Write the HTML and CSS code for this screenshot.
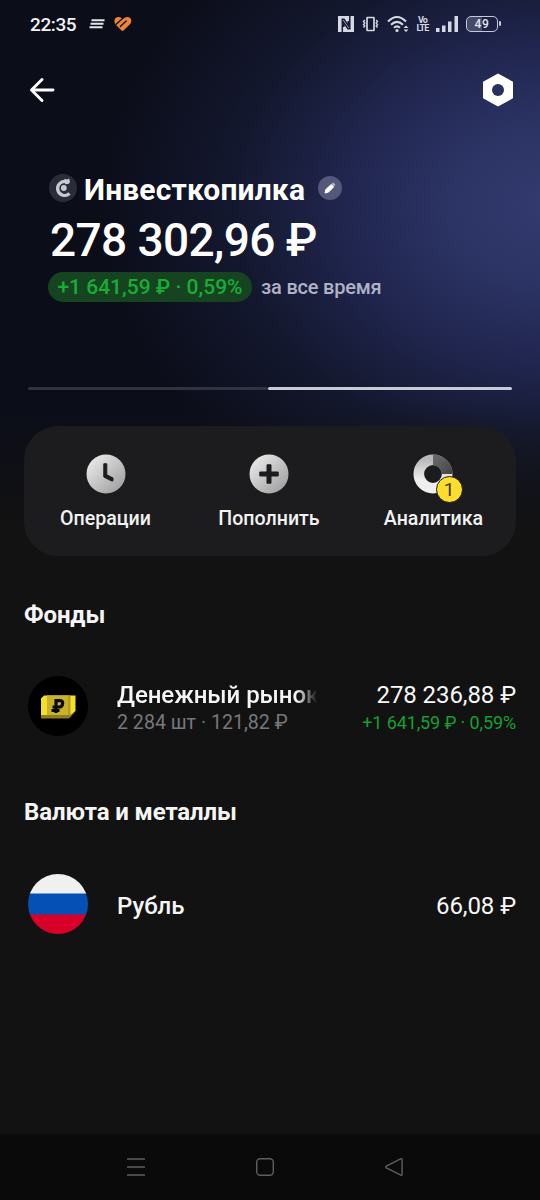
FILE: index.html
```html
<!DOCTYPE html>
<html lang="ru">
<head>
<meta charset="utf-8">
<title>Инвесткопилка</title>
<link rel="stylesheet" href="styles.css">
</head>
<body>
<div class="screen">
  <header class="status">
    <div class="status-left">
      <span class="clock">22:35</span>
      <svg class="ic-lines" width="16" height="10" viewBox="0 0 16 10" stroke="#e6e7ec" stroke-width="1.9"><path d="M2.5 1.2H15.500M1.500 4.700H14.500M.5 8.300H13.500"/></svg>
      <svg class="ic-heart" width="18" height="16" viewBox="0 0 18 16"><path fill="#ee8438" d="M8.800 3.200Q11 .9 13.800 1Q17.300 1.500 17.300 5Q17.200 7.100 15.700 8.500L9.500 14.500Q8.500 15.300 7.500 14.500L1.800 8.800Q.4 7.300.4 5Q.6 1.300 4.200 1Q7 .9 8.800 3.200Z"/><path fill="none" stroke="#0d0f1e" stroke-width="1.300" stroke-linecap="round" d="M2.200 8.300 8.300 2.800M6.300 10.500 12.200 5"/></svg>
    </div>
    <div class="status-right">
      <svg width="16" height="16" viewBox="0 0 16 16"><path fill="#d6d8e2" d="M0 0H16V16H0Z"/><path fill="none" stroke="#181c38" stroke-width="1.500" d="M4.300 16V3.300H6L10.300 9.500V5M11.800 0V12.700H10L5.800 6.700V11"/></svg>
      <svg width="17" height="16" viewBox="0 0 17 16" fill="none" stroke="#d6d8e2" stroke-width="1.700"><rect x="5" y="1.500" width="7" height="13" rx=".5"/><path d="M2.800 4 1.500 5.500 2.800 7 1.500 8.500 2.800 10 1.500 11.500M14.200 4 15.500 5.500 14.200 7 15.500 8.500 14.200 10 15.500 11.500" stroke-width="1.400"/></svg>
      <svg width="22" height="18" viewBox="0 0 22 18" fill="none" stroke="#d6d8e2" stroke-width="2.100"><path d="M1 6.500Q10 -2.600 19 6.500M4 9.700Q10 4 16 9.700M7 12.700Q10 10 13 12.700"/><circle cx="10" cy="15.500" r="1.600" fill="#d6d8e2" stroke="none"/><path fill="#d6d8e2" stroke="none" d="M16.500 13 19 10.500 21.500 13ZM16.500 14.500H21.500L19 17Z"/></svg>
      <span class="volte"><span>Vo</span><span>LTE</span></span>
      <svg width="22" height="16" viewBox="0 0 22 16" fill="#d6d8e2"><path d="M0 12H3.500V16H0ZM6 9.500H9.500V16H6ZM12 5.500H15.500V16H12ZM18.500 0H22V16H18.500Z"/></svg>
      <span class="battery">49</span>
    </div>
  </header>

  <nav class="topbar">
    <svg width="26" height="26" viewBox="0 0 26 26" fill="none" stroke="#fff" stroke-width="2.900" stroke-linecap="round" stroke-linejoin="round"><path d="M13 2.500 2.500 13 13 23.500M3 13H24"/></svg>
    <svg width="30" height="34" viewBox="0 0 30 34"><path fill="#fff" stroke="#fff" stroke-width="2" stroke-linejoin="round" d="M15 1.500 29 9.300V24.700L15 32.500 1 24.700V9.300Z"/><circle cx="15" cy="17" r="6" fill="#28305f"/></svg>
  </nav>

  <section class="summary">
    <div class="name">
      <svg width="28" height="28" viewBox="0 0 28 28"><circle cx="14" cy="14" r="14" fill="#2b2c3a"/><path d="M20.500 19.500A7 7 0 1 1 17 7.600" fill="none" stroke="#c9cacf" stroke-width="3.200"/><path d="M15.500 4.800 18 5.500 20 4.500 21 7.500 20 9.800 16 10.300Z" fill="#c9cacf"/><circle cx="14.800" cy="14" r="2.900" fill="#c9cacf"/></svg>
      <h1>Инвесткопилка</h1>
      <svg class="edit" width="24" height="24" viewBox="0 0 24 24"><circle cx="12" cy="12" r="12" fill="#54597c"/><path d="M7 17 7.800 13.600 13.300 8.400 15.600 10.900 10.400 16.200Z" fill="#fff" stroke="#fff" stroke-linejoin="round"/><path d="M14.500 7.200 16.700 9.500" stroke="#babccc" stroke-width="2"/></svg>
    </div>
    <div class="total">278 302,96 ₽</div>
    <div class="gain"><span class="pill">+1 641,59 ₽ · 0,59%</span><span class="period">за все время</span></div>
  </section>

  <div class="pager"><span></span><span class="active"></span></div>

  <section class="actions">
    <div class="action">
      <svg width="40" height="40" viewBox="0 0 40 40"><defs><linearGradient id="silver" x1="0" y1="0" x2="1" y2="1"><stop offset=".1" stop-color="#e9e9e9"/><stop offset=".9" stop-color="#a0a0a2"/></linearGradient></defs><circle cx="20" cy="20" r="19.500" fill="url(#silver)"/><path fill="#1c1c1e" stroke="#1c1c1e" stroke-linejoin="round" d="M17.800 9.800H20.800V20.800L27 24V26.800L25.800 27 17.800 23Z"/></svg>
      <span>Операции</span>
    </div>
    <div class="action">
      <svg width="40" height="40" viewBox="0 0 40 40"><circle cx="20" cy="20" r="19.500" fill="url(#silver)"/><path fill="#1c1c1e" stroke="#1c1c1e" stroke-linejoin="round" d="M18 10.800H22V18H29.200V22H22V29.200H18V22H10.800V18H18Z"/></svg>
      <span>Пополнить</span>
    </div>
    <div class="action">
      <div class="chart">
        <svg width="40" height="40" viewBox="0 0 40 40"><defs><linearGradient id="ring" x2="0" y2="1"><stop stop-color="#b9b9bb"/><stop offset=".7" stop-color="#eee"/></linearGradient><linearGradient id="slice" x2="1" y2="1"><stop stop-color="#6d6d6e"/><stop offset="1" stop-color="#434344"/></linearGradient></defs><circle cx="20" cy="20" r="14.200" fill="none" stroke="url(#ring)" stroke-width="10.600"/><path d="M20 .4A19.600 19.600 0 0 1 39.600 20H28.800A8.800 8.800 0 0 0 20 11.200Z" fill="url(#slice)"/></svg>
        <span class="badge">1</span>
      </div>
      <span>Аналитика</span>
    </div>
  </section>

  <h2 class="funds">Фонды</h2>
  <div class="row">
    <svg width="60" height="60" viewBox="0 0 60 60"><circle cx="30" cy="30" r="30" fill="#000"/><path fill="#f5df2d" d="M16 19.500H47.500V35L43 39H13V22.500Z"/><path fill="#b39f27" d="M19 19.500H42.500V39H19Z"/><path fill="#c8b329" d="M19 19.500H40V39H19Z"/><path fill="#8f7d20" d="M13 39H42L47 36 41 42.500H13Z"/><path fill="none" stroke="#090909" stroke-width="3.200" d="M28 37V24.600H32Q35.500 24.800 34.500 28.300Q33.800 31 31 31H24.500M23.500 34.500H31.500"/></svg>
    <div class="asset"><div class="asset-name fade">Денежный рынок</div><div class="asset-note">2 284 шт · 121,82 ₽</div></div>
    <div class="value"><div class="amount">278 236,88 ₽</div><div class="change">+1 641,59 ₽ · 0,59%</div></div>
  </div>

  <h2 class="currency">Валюта и металлы</h2>
  <div class="row">
    <svg width="60" height="60" viewBox="0 0 60 60"><defs><clipPath id="disc"><circle cx="30" cy="30" r="30"/></clipPath></defs><g clip-path="url(#disc)"><path fill="#f0f0f1" d="M0 0H60V20H0Z"/><path fill="#0450b5" d="M0 19.500H60V41H0Z"/><path fill="#d80029" d="M0 40.500H60V60H0Z"/></g></svg>
    <div class="asset"><div class="asset-name">Рубль</div></div>
    <div class="value"><div class="amount">66,08 ₽</div></div>
  </div>

  <footer class="system-nav">
    <svg width="20" height="20" viewBox="0 0 20 20" stroke="#5f5f5f" stroke-width="1.500"><path d="M1 2H19M1 10H19M1 18H19"/></svg>
    <svg width="20" height="20" viewBox="0 0 20 20" fill="none" stroke="#5f5f5f" stroke-width="1.400"><rect x="1.700" y="1.700" width="16.600" height="16.600" rx="3.500"/></svg>
    <svg width="20" height="20" viewBox="0 0 20 20" fill="none" stroke="#5f5f5f" stroke-width="1.400" stroke-linejoin="round"><path d="M17 1.700Q18.100 1.300 18.100 2.700V17.300Q18.100 18.700 16.900 18.200L2.300 10.800Q1.100 10 2.300 9.200Z"/></svg>
  </footer>
</div>
</body>
</html>
```
FILE: styles.css
```css
* { box-sizing: border-box; }
body { margin: 0; background: #121212; }
h1, h2 { margin: 0; }
svg { display: block; flex: none; }

.screen {
  width: 540px;
  height: 1200px;
  display: flex;
  flex-direction: column;
  font-family: Roboto, "Noto Sans", sans-serif;
  color: #fff;
  white-space: nowrap;
  background:
    linear-gradient(to bottom, rgba(18, 18, 18, 0) 400px, #121212 535px),
    radial-gradient(ellipse 450px 350px at 550px 205px, #333b6f 0%, #2c3465 22%, #20264f 45%, #14182f 70%, #0b0d19 100%);
}

.status { height: 48px; padding: 0 42px 0 30px; display: flex; justify-content: space-between; align-items: center; }
.status-left, .status-right { display: flex; align-items: center; }
.clock { width: 59px; padding-top: 1px; font-size: 19px; line-height: 24px; font-weight: 500; color: #f1f1f4; letter-spacing: -.4px; }
.ic-heart { margin-left: 9px; }
.status-right { gap: 8px; }
.volte { width: 11px; font-size: 9px; line-height: 8px; font-weight: 700; color: #d6d8e2; letter-spacing: -.8px; display: flex; flex-direction: column; align-items: center; }
.battery {
  position: relative;
  width: 32px;
  height: 16px;
  border: 1.500px solid #c5c8d6;
  border-radius: 5px;
  background: linear-gradient(90deg, #454a68 50%, transparent 50%);
  font-size: 12px;
  line-height: 14px;
  font-weight: 500;
  letter-spacing: .6px;
  text-align: center;
  color: #e4e5ed;
}
.battery::after { content: ""; position: absolute; right: -4px; top: 4px; width: 2px; height: 5px; border-radius: 1px; background: #c5c8d6; }

.topbar { height: 84px; padding: 0 27px 0 29px; display: flex; justify-content: space-between; align-items: center; }

.summary { height: 255px; padding: 39px 48px 0; }
.name { height: 38px; display: flex; align-items: center; }
.name svg { margin-top: -4px; margin-left: 1px; }
.name h1 { width: 223px; margin-left: 7px; font-size: 30px; line-height: 38px; font-weight: 700; letter-spacing: .15px; }
.name .edit { margin-left: 11px; }
.total { height: 62px; padding-left: 2px; font-size: 46px; line-height: 62px; font-weight: 500; letter-spacing: -.6px; }
.gain { height: 31px; display: flex; align-items: center; font-size: 20px; line-height: 30px; }
.pill { width: 204px; height: 30px; border-radius: 15px; background: #164420; color: #18ad36; text-align: center; font-size: 21px; font-weight: 500; }
.period { margin-left: 9px; color: #b0b2c6; font-weight: 500; letter-spacing: -.2px; }

.pager { height: 3px; margin: 0 28px; display: flex; flex: none; }
.pager span { width: 240px; background: #303341; border-radius: 2px; }
.pager .active { width: 244px; background: #c8cad5; }

.actions {
  height: 130px;
  margin: 36px 24px 0;
  padding: 28px 0 0;
  border-radius: 34px;
  background: #1c1c1e;
  display: grid;
  grid-template-columns: 163px 164px 165px;
  flex: none;
}
.action { display: flex; flex-direction: column; align-items: center; font-size: 19.600px; line-height: 28px; font-weight: 500; color: #f2f2f2; gap: 11px; }
.chart { position: relative; left: -1px; }
.badge { position: absolute; left: 23px; top: 22px; width: 27px; height: 27px; border: 1px solid #1c1c1e; border-radius: 50%; background: #ffdd2d; color: #393316; font-size: 19px; line-height: 25px; font-weight: 400; text-align: center; }

h2 { margin-left: 24px; font-size: 24px; line-height: 32px; font-weight: 700; color: #f5f5f5; letter-spacing: -.12px; }
.funds { margin-top: 43px; }
.currency { margin-top: 60px; }
.row { height: 60px; margin: 46px 24px 0 28px; display: flex; flex: none; align-items: center; }
.funds + .row { margin-top: 45px; }
.asset { width: 200px; margin-left: 29px; padding-top: 4px; }
.asset-name { font-size: 24px; line-height: 30px; font-weight: 500; color: #f5f5f5; letter-spacing: -.05px; }
.fade { -webkit-mask-image: linear-gradient(90deg, #000 180px, transparent 200px); mask-image: linear-gradient(90deg, #000 180px, transparent 200px); }
.asset-note { font-size: 19.600px; line-height: 26px; color: #77787c; }
.value { flex: 1; padding-top: 4px; text-align: right; }
.amount { font-size: 24px; line-height: 30px; color: #f8f8f8; letter-spacing: -.08px; }
.change { font-size: 18px; line-height: 26px; color: #14a02f; letter-spacing: -.12px; }

.system-nav { height: 66px; margin-top: auto; padding: 0 136px 0 126px; background: #0a0a0a; display: flex; align-items: center; justify-content: space-between; }
```
